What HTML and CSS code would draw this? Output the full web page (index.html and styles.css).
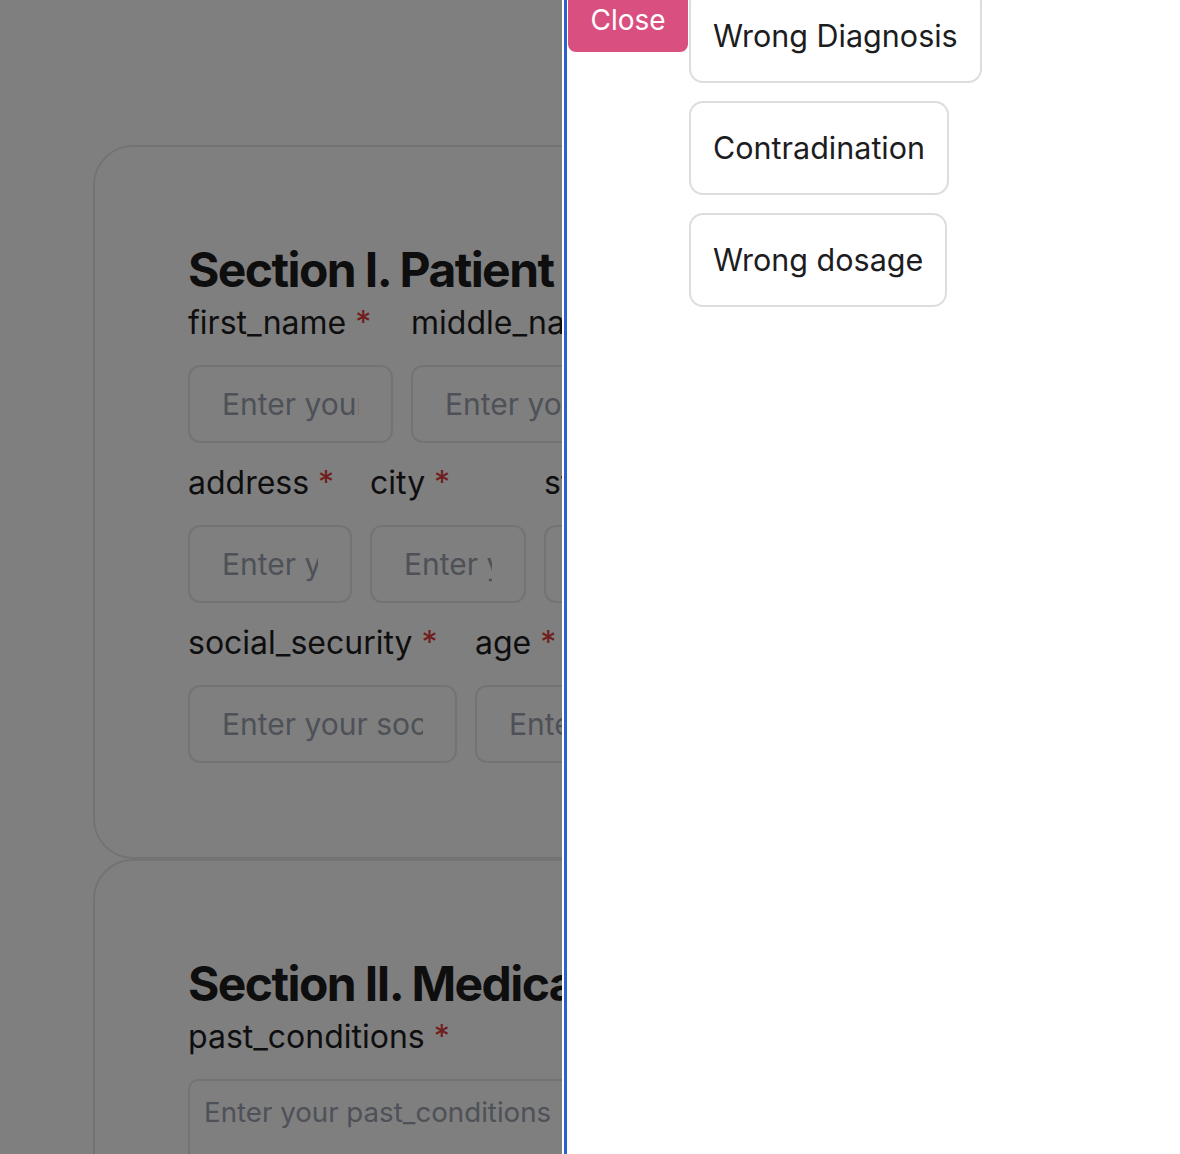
FILE: index.html
```html
<!DOCTYPE html>
<html lang="en">
<head>
<meta charset="utf-8">
<title>Report form</title>
<link rel="stylesheet" href="styles.css">
</head>
<body>
<main class="page">
  <section class="card">
    <h2 class="card-title">Section I. Patient Information</h2>
    <div class="row">
      <div class="field w-first"><label class="label">first_name <span class="req">*</span></label><input class="input" placeholder="Enter your first_name"></div>
      <div class="field w-middle"><label class="label">middle_name <span class="req">*</span></label><input class="input" placeholder="Enter your middle_name"></div>
    </div>
    <div class="row">
      <div class="field w-address"><label class="label">address <span class="req">*</span></label><input class="input" placeholder="Enter your address"></div>
      <div class="field w-city"><label class="label">city <span class="req">*</span></label><input class="input" placeholder="Enter your city"></div>
      <div class="field w-state"><label class="label">state <span class="req">*</span></label><input class="input" placeholder="Enter your state"></div>
    </div>
    <div class="row">
      <div class="field w-ssn"><label class="label">social_security <span class="req">*</span></label><input class="input" placeholder="Enter your social_security"></div>
      <div class="field w-age"><label class="label">age <span class="req">*</span></label><input class="input" placeholder="Enter your age"></div>
    </div>
  </section>
  <section class="card">
    <h2 class="card-title">Section II. Medical History</h2>
    <div class="field"><label class="label">past_conditions <span class="req">*</span></label><textarea class="textarea" placeholder="Enter your past_conditions"></textarea></div>
  </section>
</main>
<div class="overlay"></div>
<aside class="panel">
  <div class="panel-inner">
    <button class="close-btn" type="button">Close</button>
    <ul class="options">
      <li class="option">Wrong Diagnosis</li>
      <li class="option">Contradination</li>
      <li class="option">Wrong dosage</li>
    </ul>
  </div>
</aside>
</body>
</html>
```

FILE: styles.css
```css
* { box-sizing: border-box; }
html, body { margin: 0; padding: 0; }
body {
  font-family: Inter, "Noto Sans", sans-serif;
  background: #ffffff;
  color: #1d1d1f;
  overflow: hidden;
  height: 1154px;
}
.page {
  padding: 145px 93px 0;
}
.card {
  border: 2px solid #e6e6e6;
  border-radius: 40px;
  padding: 94px 93px;
  background: #ffffff;
  display: flex;
  flex-direction: column;
  gap: 17px;
}
.card-title {
  margin: 0 0 -16px;
  font-size: 48px;
  line-height: 58px;
  font-weight: 700;
  letter-spacing: -0.033em;
  color: #1c1c1f;
}
.row {
  display: flex;
  gap: 18px;
}
.field {
  display: flex;
  flex-direction: column;
  gap: 20px;
  flex: none;
}
.label {
  display: block;
  height: 45px;
  font-size: 32px;
  line-height: 45px;
  color: #1d1d1f;
  white-space: nowrap;
}
.req { color: #e23b3b; }
.input {
  font-family: inherit;
  font-size: 30px;
  line-height: 36px;
  padding: 19px 32px;
  border: 2px solid #e5e7eb;
  border-radius: 12px;
  background: #ffffff;
  width: 100%;
  outline: none;
}
.input::placeholder, .textarea::placeholder { color: #9ca3af; opacity: 1; }
.w-first { width: 205px; }
.w-middle { width: 205px; }
.w-address { width: 164px; }
.w-city { width: 156px; }
.w-state { width: 164px; }
.w-ssn { width: 269px; }
.w-age { width: 205px; }
.textarea {
  font-family: inherit;
  font-size: 27.7px;
  line-height: 34px;
  padding: 14px;
  border: 2px solid #e5e7eb;
  border-radius: 10px;
  width: 100%;
  height: 160px;
  resize: none;
  background: #fff;
}
.overlay {
  position: fixed;
  inset: 0;
  background: rgba(0, 0, 0, 0.5);
}
.panel {
  position: fixed;
  top: 0;
  right: 0;
  bottom: 0;
  left: 562px;
  background: #ffffff;
  border-left: 2px solid #ffffff;
  overflow: hidden;
}
.panel-inner {
  height: calc(100% + 11px);
  border-left: 3px solid #2d5fcf;
  padding-left: 1px;
  display: flex;
  align-items: flex-start;
  margin-top: -11px;
}
.close-btn {
  font-family: inherit;
  font-size: 28px;
  line-height: 35px;
  padding: 14px 20px;
  width: 120px;
  background: #d94f80;
  color: #ffffff;
  border: none;
  border-radius: 0 0 8px 8px;
  flex: none;
  text-align: center;
}
.options {
  list-style: none;
  margin: 0 0 0 1px;
  padding: 0;
  display: flex;
  flex-direction: column;
  align-items: flex-start;
  gap: 18px;
}
.option {
  font-size: 30.5px;
  line-height: 38px;
  padding: 26px 22px;
  border: 2px solid #dddddd;
  border-radius: 14px;
  color: #1d1d1f;
  background: #fff;
}
```
